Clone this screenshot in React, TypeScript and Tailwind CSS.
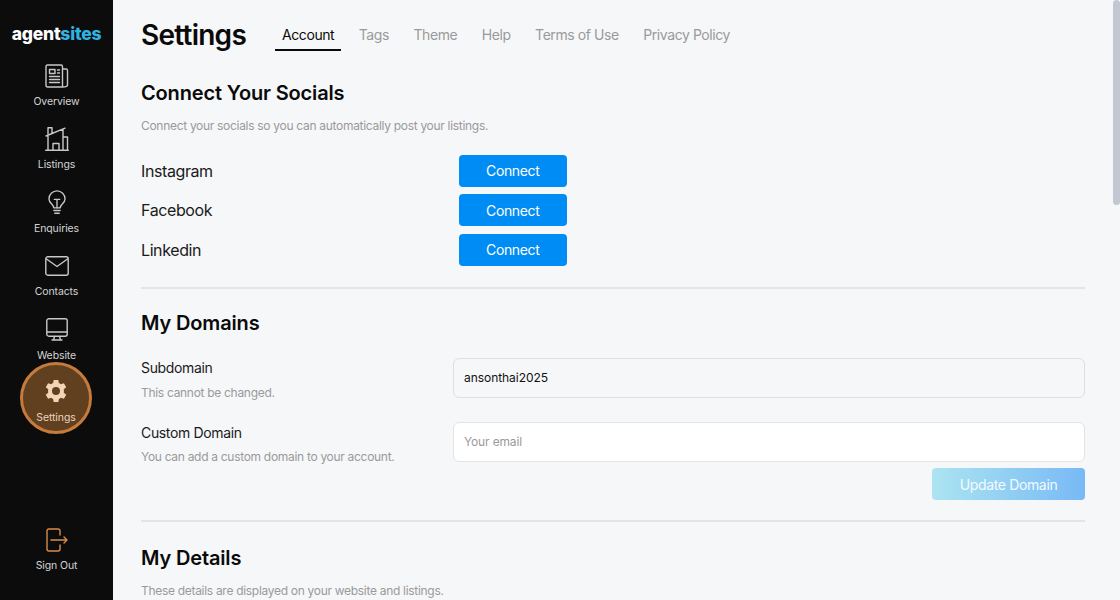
import React from "react";

const stroke = "#c8c8c8";

function IconOverview() {
  return (
    <svg width="24" height="24" viewBox="0 0 24 24" fill="none" stroke={stroke} strokeWidth="1.4" strokeLinejoin="round" strokeLinecap="round">
      <path d="M17.5 23H2.5Q1 23 1 21.5V2.500Q1 1 2.500 1H16Q17.500 1 17.500 2.500V23Q22.5 23 22.5 21V6.5Q22.5 5 21 5H17.5" />
      <rect x="4.5" y="5.500" width="5.5" height="4" />
      <path d="M12.5 6H14.5M12.5 9H14.5M4.5 12.5H14.5M4.5 15.5H14.5M4.5 18.5H14.5" />
    </svg>
  );
}
function IconListings() {
  return (
    <svg width="24" height="24" viewBox="0 0 24 24" fill="none" stroke={stroke} strokeWidth="1.4" strokeLinejoin="round" strokeLinecap="round">
      <path d="M0.7 23.300H23.300M3 9V23.300M3 8.300V0.700H7V6.700M1 9L20 1.200M18 2.500V23.300M18 10H22.500V23.300M8 23.300V16.500H14V23.300" />
    </svg>
  );
}
function IconEnquiries() {
  return (
    <svg width="18" height="25" viewBox="0 0 20 28" fill="none" stroke={stroke} strokeWidth="1.5" strokeLinejoin="round" strokeLinecap="round">
      <path d="M6.5 20C6 16 1 14.5 1 10A9 9 0 0 1 19 10C19 14.5 14 16 13.500 20Z" />
      <path d="M10 20V11M7 10.500H13M6.500 23H13.500M7.500 26H12.500" />
    </svg>
  );
}
function IconContacts() {
  return (
    <svg width="24" height="20" viewBox="0 0 24 20" fill="none" stroke={stroke} strokeWidth="1.4" strokeLinejoin="round" strokeLinecap="round">
      <rect x="0.8" y="0.8" width="22.4" height="18.400" rx="2" />
      <path d="M1.500 3L12 10.500L22.500 3" />
    </svg>
  );
}
function IconWebsite() {
  return (
    <svg width="22" height="23" viewBox="0 0 22 23" fill="none" stroke={stroke} strokeWidth="1.4" strokeLinejoin="round" strokeLinecap="round">
      <rect x="0.8" y="0.8" width="20.4" height="17.400" rx="2" />
      <path d="M1 14H21M8.500 18.500L7.500 22H14.500L13.500 18.500M6 22H16" />
    </svg>
  );
}
function IconGear() {
  return (
    <svg width="24" height="24" viewBox="0 0 24 24" fill="#f3d4b6">
      <path
        fillRule="evenodd"
        d="M9.700 1H14.300L14.900 4.100C15.600 4.400 16.300 4.800 16.900 5.300L19.900 4.200L22.200 8.200L19.800 10.300C19.900 11.100 19.900 12.900 19.800 13.700L22.200 15.800L19.900 19.800L16.900 18.700C16.300 19.200 15.600 19.600 14.900 19.900L14.300 23H9.700L9.100 19.900C8.400 19.600 7.700 19.200 7.100 18.700L4.100 19.800L1.800 15.800L4.200 13.700C4.100 12.900 4.100 11.100 4.200 10.300L1.800 8.200L4.100 4.200L7.100 5.300C7.700 4.800 8.400 4.400 9.100 4.100ZM12 8A4 4 0 1 0 12 16A4 4 0 1 0 12 8Z"
      />
    </svg>
  );
}
function IconSignOut() {
  return (
    <svg width="22" height="24" viewBox="0 0 22 24" fill="none" stroke="#d98c4a" strokeWidth="1.4" strokeLinejoin="round" strokeLinecap="round">
      <path d="M14 7V3Q14 1 12 1H3Q1 1 1 3V21Q1 23 3 23H12Q14 23 14 21V17" />
      <path d="M5 12H21M18 9L21 12L18 15" />
    </svg>
  );
}

function NavItem({ icon, label }: { icon: React.ReactNode; label: string }) {
  return (
    <div className="flex h-[63.400px] shrink-0 flex-col items-center">
      <div className="flex h-[36px] items-center justify-center">{icon}</div>
      <span className="text-[10.500px] leading-[16px] tracking-[-0.1px] text-[#d4d4d4]">{label}</span>
    </div>
  );
}

function Row({ label }: { label: string }) {
  return (
    <div className="flex h-[33px] shrink-0 items-center">
      <span className="w-[317.500px] text-[16px] tracking-[-0.025em] text-[#1a1a1a]">{label}</span>
      <button className="h-[32px] w-[108.500px] rounded-[4px] bg-[#008cf5] text-[14px] tracking-[-0.025em] text-white">Connect</button>
    </div>
  );
}

export default function App() {
  return (
    <div className="relative flex h-[600px] w-[1120px] overflow-hidden bg-[#f6f7f9] font-['Inter',sans-serif]">
      <aside className="flex h-full w-[113px] shrink-0 flex-col items-center bg-[#0c0c0c] pt-[23px]">
        <div className="text-[17.500px] leading-[22px] font-extrabold tracking-[-0.2px] text-white">
          agent<span className="text-[#2fb3e0]">sites</span>
        </div>
        <nav className="mt-[13px] flex w-full flex-col">
          <NavItem icon={<IconOverview />} label="Overview" />
          <NavItem icon={<IconListings />} label="Listings" />
          <NavItem icon={<IconEnquiries />} label="Enquiries" />
          <NavItem icon={<IconContacts />} label="Contacts" />
          <NavItem icon={<IconWebsite />} label="Website" />
          <div className="relative h-[63.400px] shrink-0">
            <div className="absolute -top-[13px] left-[20px] flex h-[72px] w-[72px] flex-col items-center rounded-full border-[3px] border-[#c67a3c] bg-[#61401f] pt-[14px]">
              <IconGear />
              <span className="mt-[7px] text-[10.500px] leading-[16px] tracking-[-0.1px] text-[#e9d4c0]">Settings</span>
            </div>
          </div>
        </nav>
        <div className="mt-auto mb-[26px] flex flex-col items-center">
          <IconSignOut />
          <span className="mt-[6px] text-[10.500px] leading-[16px] tracking-[-0.1px] text-[#d4d4d4]">Sign Out</span>
        </div>
      </aside>

      <main className="flex min-w-0 flex-1 flex-col pt-[15px] pr-[35px] pl-[28px]">
        <div className="flex shrink-0 items-start">
          <h1 className="text-[28px] leading-[40px] font-semibold tracking-[-0.75px] text-[#0a0a0a]">Settings</h1>
          <div className="ml-[29px] flex pt-[2px] text-[14px] tracking-[-0.42px] text-[#9a9a9a]">
            <span className="mr-[10.500px] flex h-[34px] items-start border-b-2 border-[#0a0a0a] px-[7px] pt-[8px] leading-[20px] text-[#0a0a0a]">Account</span>
            {["Tags", "Theme", "Help", "Terms of Use", "Privacy Policy"].map((t) => (
              <span key={t} className="mr-[10.500px] px-[7px] pt-[8px] leading-[20px]">{t}</span>
            ))}
          </div>
        </div>

        <h2 className="mt-[23px] shrink-0 text-[20px] leading-[30px] font-semibold tracking-[-0.15px] text-[#0a0a0a]">Connect Your Socials</h2>
        <p className="mt-[9px] shrink-0 text-[12px] leading-[18px] tracking-[-0.025em] text-[#9a9a9a]">Connect your socials so you can automatically post your listings.</p>
        <div className="mt-[19px] flex shrink-0 flex-col gap-[6.500px]">
          <Row label="Instagram" />
          <Row label="Facebook" />
          <Row label="Linkedin" />
        </div>
        <div className="mt-[21px] h-[2px] shrink-0 bg-[#e3e4e6]" />

        <h2 className="mt-[19px] shrink-0 text-[20px] leading-[30px] font-semibold tracking-[-0.15px] text-[#0a0a0a]">My Domains</h2>
        <div className="mt-[20px] flex shrink-0 items-start">
          <div className="w-[312px]">
            <div className="text-[14px] leading-[20px] tracking-[-0.025em] text-[#1a1a1a]">Subdomain</div>
            <div className="mt-[6px] text-[12px] leading-[18px] tracking-[-0.025em] text-[#9a9a9a]">This cannot be changed.</div>
          </div>
          <div className="flex h-[39.500px] flex-1 items-center rounded-[6px] border border-[#dedfe2] px-[10px] text-[12px] tracking-[-0.05px] text-[#111111]">ansonthai2025</div>
        </div>
        <div className="mt-[20px] flex shrink-0 items-start">
          <div className="w-[312px]">
            <div className="pt-[1px] text-[14px] leading-[20px] tracking-[-0.025em] text-[#1a1a1a]">Custom Domain</div>
            <div className="mt-[5px] text-[12px] leading-[18px] tracking-[-0.025em] text-[#9a9a9a]">You can add a custom domain to your account.</div>
          </div>
          <div className="flex h-[39.500px] flex-1 items-center rounded-[6px] border border-[#e3e4e6] bg-white px-[10px] text-[12px] tracking-[-0.15px] text-[#9a9a9a]">Your email</div>
        </div>
        <div className="mt-[2px] flex shrink-0 justify-end">
          <button className="h-[32px] w-[153px] rounded-[4px] bg-gradient-to-r from-[#ace4f1] to-[#78b9f5] text-[14px] tracking-[-0.025em] text-[#f2faff]">Update Domain</button>
        </div>
        <div className="mt-[20px] h-[2px] shrink-0 bg-[#e3e4e6]" />

        <h2 className="mt-[21px] shrink-0 text-[20px] leading-[30px] font-semibold tracking-[-0.15px] text-[#0a0a0a]">My Details</h2>
        <p className="mt-[9px] shrink-0 text-[12px] leading-[18px] tracking-[-0.025em] text-[#9a9a9a]">These details are displayed on your website and listings.</p>
      </main>

      <div className="absolute top-0 right-0 h-[205px] w-[7px] rounded-[4px] bg-[#c2c7d2]" />
    </div>
  );
}
